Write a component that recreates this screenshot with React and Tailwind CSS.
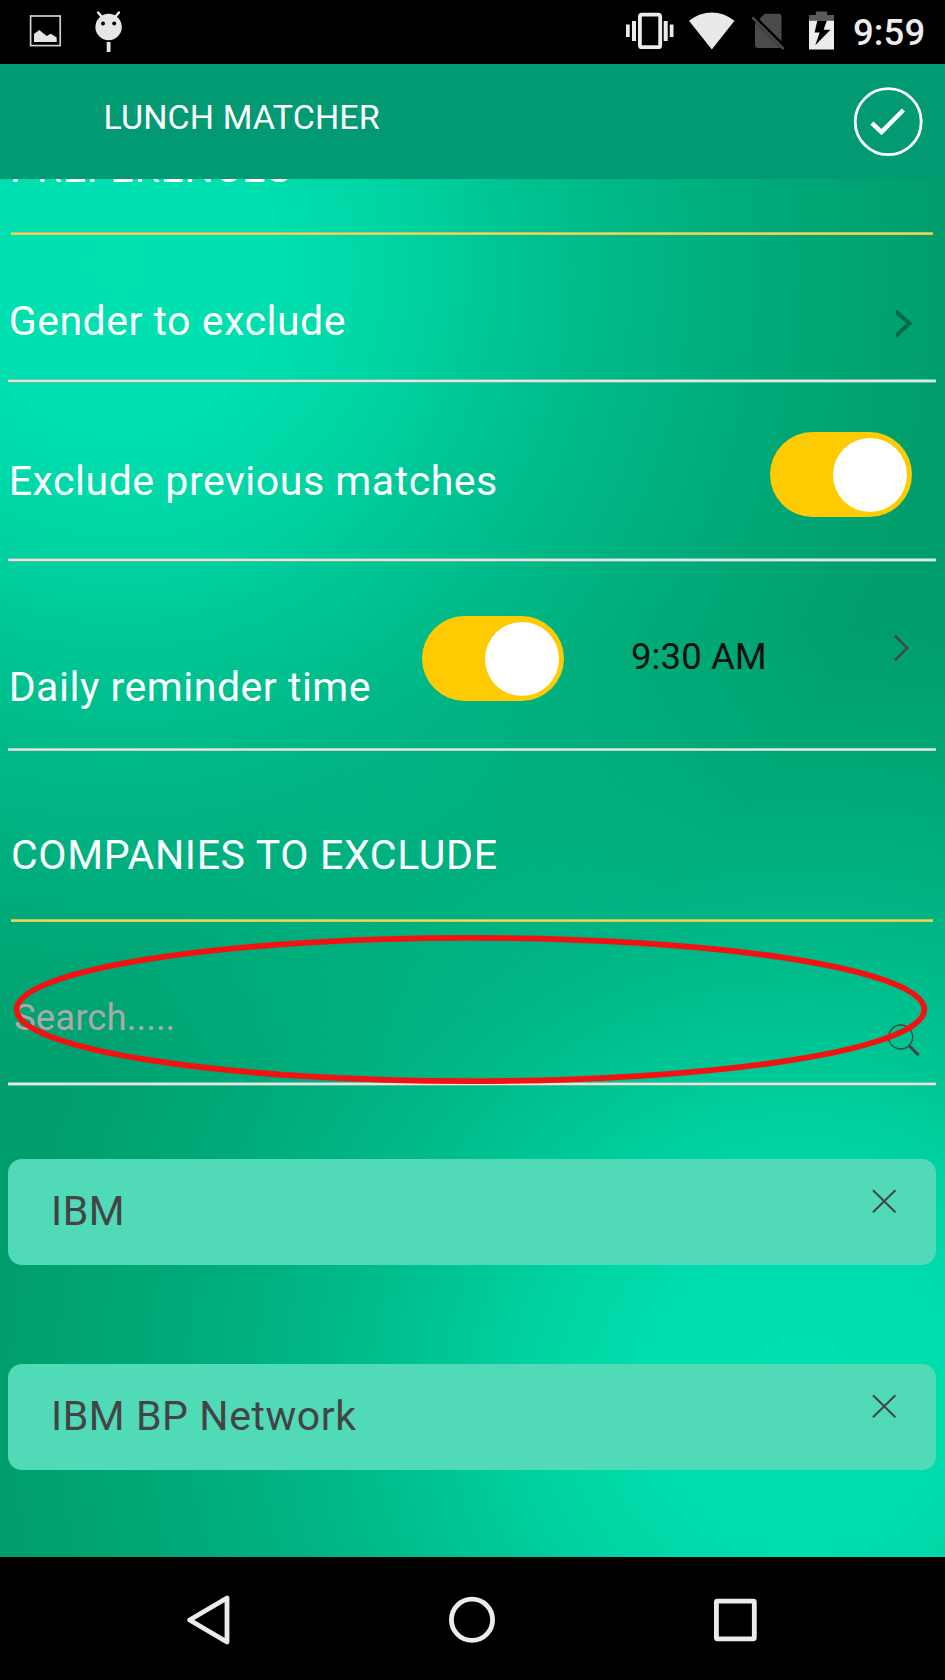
import React from "react";

const LABEL = "text-[41px] leading-[48px] whitespace-nowrap";

function StatusBar() {
  return (
    <div className="flex h-[64px] shrink-0 items-start justify-between bg-black">
      <svg className="ml-[24px] h-[64px] w-[110px]" viewBox="24 0 110 64" fill="none">
        <rect x="30.6" y="16" width="29.6" height="29.6" stroke="#cfcfcf" strokeWidth="1.7" />
        <path d="M34 34l5.3-4 7.4 6 4-2.2 6 3.6V42H34z" fill="#e6e6e6" />
        <path d="M98 12.4l3.6 4.2M119 12.4l-3.6 4.2" stroke="#e6e6e6" strokeWidth="2.4" strokeLinecap="round" />
        <circle cx="108.6" cy="27" r="13.2" fill="#e6e6e6" />
        <circle cx="103" cy="23.6" r="2" fill="#000" />
        <circle cx="114.2" cy="23.6" r="2" fill="#000" />
        <rect x="106.7" y="42" width="3.8" height="10" fill="#e6e6e6" />
      </svg>
      <div className="flex">
        <svg className="h-[64px] w-[220px]" viewBox="620 0 220 64" fill="none">
          <rect x="639.9" y="14.7" width="20.3" height="32.5" rx="2" stroke="#ececec" strokeWidth="3.8" />
          <path d="M626 24.5h3.7v12.5H626zM632 21h4v20h-4zM663.7 21h4v20h-4zM669.8 24.5h3.7v12.5h-3.7z" fill="#ececec" />
          <path d="M689 20.8C703 9.6 720.5 9.6 734.5 20.8L711.8 49.5z" fill="#e9e9e9" />
          <path d="M764.5 13.8h14a3 3 0 013 3v24.500L761 21l-1.500-2zM755 22.200L780.800 48H758a3 3 0 01-3-3z" fill="#4a4a4a" />
          <path d="M752.3 17.4L783.7 49" stroke="#4a4a4a" strokeWidth="2.6" />
          <path d="M815.8 11.5h11.4V15H834v5.7h-25V15h6.8z" fill="#5a5a5a" />
          <path d="M809 20.7h25v28.8h-25z" fill="#ececec" />
          <path d="M817.3 20.7h9.5l-3.2 9.1h6.8L815.3 45.3l4.3-12.8h-5z" fill="#000" />
        </svg>
        <span className="mt-[11px] w-[105px] pl-[13px] text-[36.5px] font-medium leading-[44px] tracking-[0.1px] text-[#ececec]">9:59</span>
      </div>
    </div>
  );
}

function Header() {
  return (
    <header className="flex h-[115px] shrink-0 items-start justify-between bg-[#019a73] pl-[103.5px] pr-[21px]">
      <h1 className="pt-[33px] text-[34px] leading-[40px] tracking-[0.1px] text-white">LUNCH MATCHER</h1>
      <svg className="mt-[22px] h-[71px] w-[71px]" viewBox="0 0 71 71" fill="none" stroke="#fff">
        <circle cx="35.2" cy="35.7" r="33" strokeWidth="2.8" />
        <path d="M18.9 37.1l9.600 9L50.400 24" strokeWidth="4.5" />
      </svg>
    </header>
  );
}

function Divider() {
  return <div className="h-[4px] shrink-0 bg-[linear-gradient(#62cda8_0_1px,#eae2e4_1px_3px,#55bf98_3px_4px)]" />;
}

function GoldLine() {
  return <div className="ml-[11px] mr-[12px] h-[3px] shrink-0 bg-[linear-gradient(#a9cc64_0_1px,#fbd15a_1px_2px,#d5cf62_2px_3px)]" />;
}

function Toggle() {
  return (
    <div className="flex h-[84.5px] w-[142.5px] items-center justify-end rounded-full bg-[#fecb02] pr-[5px]">
      <div className="h-[74px] w-[74px] rounded-full bg-white" />
    </div>
  );
}

function Company({ name }) {
  return (
    <div className="flex h-[105.5px] items-start justify-between rounded-[14px] bg-[#50dab8] pl-[43px] pr-[39px] text-[#444]">
      <span className={`${LABEL} pt-[28px] tracking-[0.58px]`}>{name}</span>
      <svg className="mt-[29.5px] h-[25px] w-[25px]" viewBox="0 0 25 25" fill="none" stroke="#444" strokeWidth="2">
        <path d="M1 1.3l22.400 22M23.400 1.300l-22.400 22" />
      </svg>
    </div>
  );
}

function NavBar() {
  return (
    <nav className="flex h-[123px] shrink-0 items-start bg-black pl-[180px]">
      <svg className="h-[123px] w-[584px]" viewBox="180 0 584 123" fill="none" stroke="#ececec" strokeWidth="4.8" strokeLinejoin="round">
        <path d="M227 41v44L189.6 63z" />
        <circle cx="472" cy="62.8" r="20.6" />
        <rect x="716.4" y="44.2" width="37.9" height="37.6" rx="1" />
      </svg>
    </nav>
  );
}

export default function App() {
  return (
    <div className="flex h-[1680px] w-[945px] flex-col overflow-hidden font-[Roboto,sans-serif]">
      <StatusBar />
      <Header />
      <main className="relative h-[1378px] shrink-0 overflow-hidden bg-[#009e6c] bg-[radial-gradient(820px_830px_at_120px_90px,rgba(0,226,178,0.99)_0%,rgba(0,226,178,0.95)_20%,rgba(0,226,178,0.83)_31%,rgba(0,226,178,0.63)_43%,rgba(0,226,178,0.4)_59%,rgba(0,226,178,0.17)_80%,rgba(0,226,178,0)_100%),radial-gradient(800px_770px_at_800px_1215px,rgba(0,226,178,0.96)_0%,rgba(0,226,178,0.92)_20%,rgba(0,226,178,0.8)_31%,rgba(0,226,178,0.61)_43%,rgba(0,226,178,0.38)_59%,rgba(0,226,178,0.16)_80%,rgba(0,226,178,0)_100%)]">
        <div className="-mt-[35px] flex flex-col text-white">
          <h2 className={`${LABEL} h-[88px] pl-[10px] tracking-[0.8px]`}>PREFERENCES</h2>
          <GoldLine />
          <div className="ml-[8px] mr-[9px] flex flex-col">
            <div className="flex h-[144px] items-start justify-between pr-[24px]">
              <span className={`${LABEL} pl-[0.7px] pt-[62px] tracking-[0.52px]`}>Gender to exclude</span>
              <svg className="mt-[75px] h-[28px] w-[16px]" viewBox="0 0 16 28" fill="none" stroke="#036650" strokeWidth="3.8">
                <path d="M-1 0.8L13.5 13.5L-1 26.8" />
              </svg>
            </div>
            <Divider />
            <div className="flex h-[175px] items-start justify-between pr-[24px]">
              <span className={`${LABEL} pl-[0.7px] pt-[74px] tracking-[0.54px]`}>Exclude previous matches</span>
              <div className="pt-[49.3px]"><Toggle /></div>
            </div>
            <Divider />
            <div className="flex h-[186px] items-start">
              <span className={`${LABEL} w-[413.5px] pl-[0.7px] pt-[101px] tracking-[0.52px]`}>Daily reminder time</span>
              <div className="w-[209.5px] pt-[54.4px]"><Toggle /></div>
              <span className="w-[262px] whitespace-nowrap pt-[73px] text-[36.5px] leading-[44px] tracking-[0.1px] text-[#111]">9:30 AM</span>
              <svg className="mt-[72px] h-[28px] w-[17px]" viewBox="0 0 17 28" fill="none" stroke="#444" strokeWidth="2.3">
                <path d="M1.8 1.6L14.3 14L1.8 26.4" />
              </svg>
            </div>
            <div className="h-[3px] bg-[linear-gradient(#a9d5c4_0_1px,#ebe6e8_1px_2px,#bcd3c8_2px_3px)]" />
          </div>
          <h2 className={`${LABEL} h-[168px] pl-[11px] pt-[80px] tracking-[0.67px]`}>COMPANIES TO EXCLUDE</h2>
          <GoldLine />
          <div className="ml-[8px] mr-[9px] flex flex-col">
            <div className="flex h-[160px] items-start justify-between pl-[6px] pr-[15px]">
              <span className="pt-[74px] text-[36.5px] leading-[44px] tracking-[0.1px] text-[#aaa]">Search.....</span>
              <svg className="mt-[101px] h-[34px] w-[34px]" viewBox="0 0 34 34" fill="none" stroke="#444">
                <circle cx="13.7" cy="14" r="12" strokeWidth="1.3" />
                <path d="M22.2 22.7l9.5 9.5" strokeWidth="3" />
              </svg>
            </div>
            <Divider />
            <div className="flex flex-col gap-[99.8px] pt-[73px]">
              <Company name="IBM" />
              <Company name="IBM BP Network" />
            </div>
          </div>
        </div>
        <svg className="absolute left-[10px] top-[750px] h-[160px] w-[920px]" viewBox="10 929 920 160" fill="none">
          <ellipse cx="470.5" cy="1009.5" rx="453.8" ry="71.7" stroke="#f31212" strokeWidth="5.8" />
        </svg>
      </main>
      <NavBar />
    </div>
  );
}
